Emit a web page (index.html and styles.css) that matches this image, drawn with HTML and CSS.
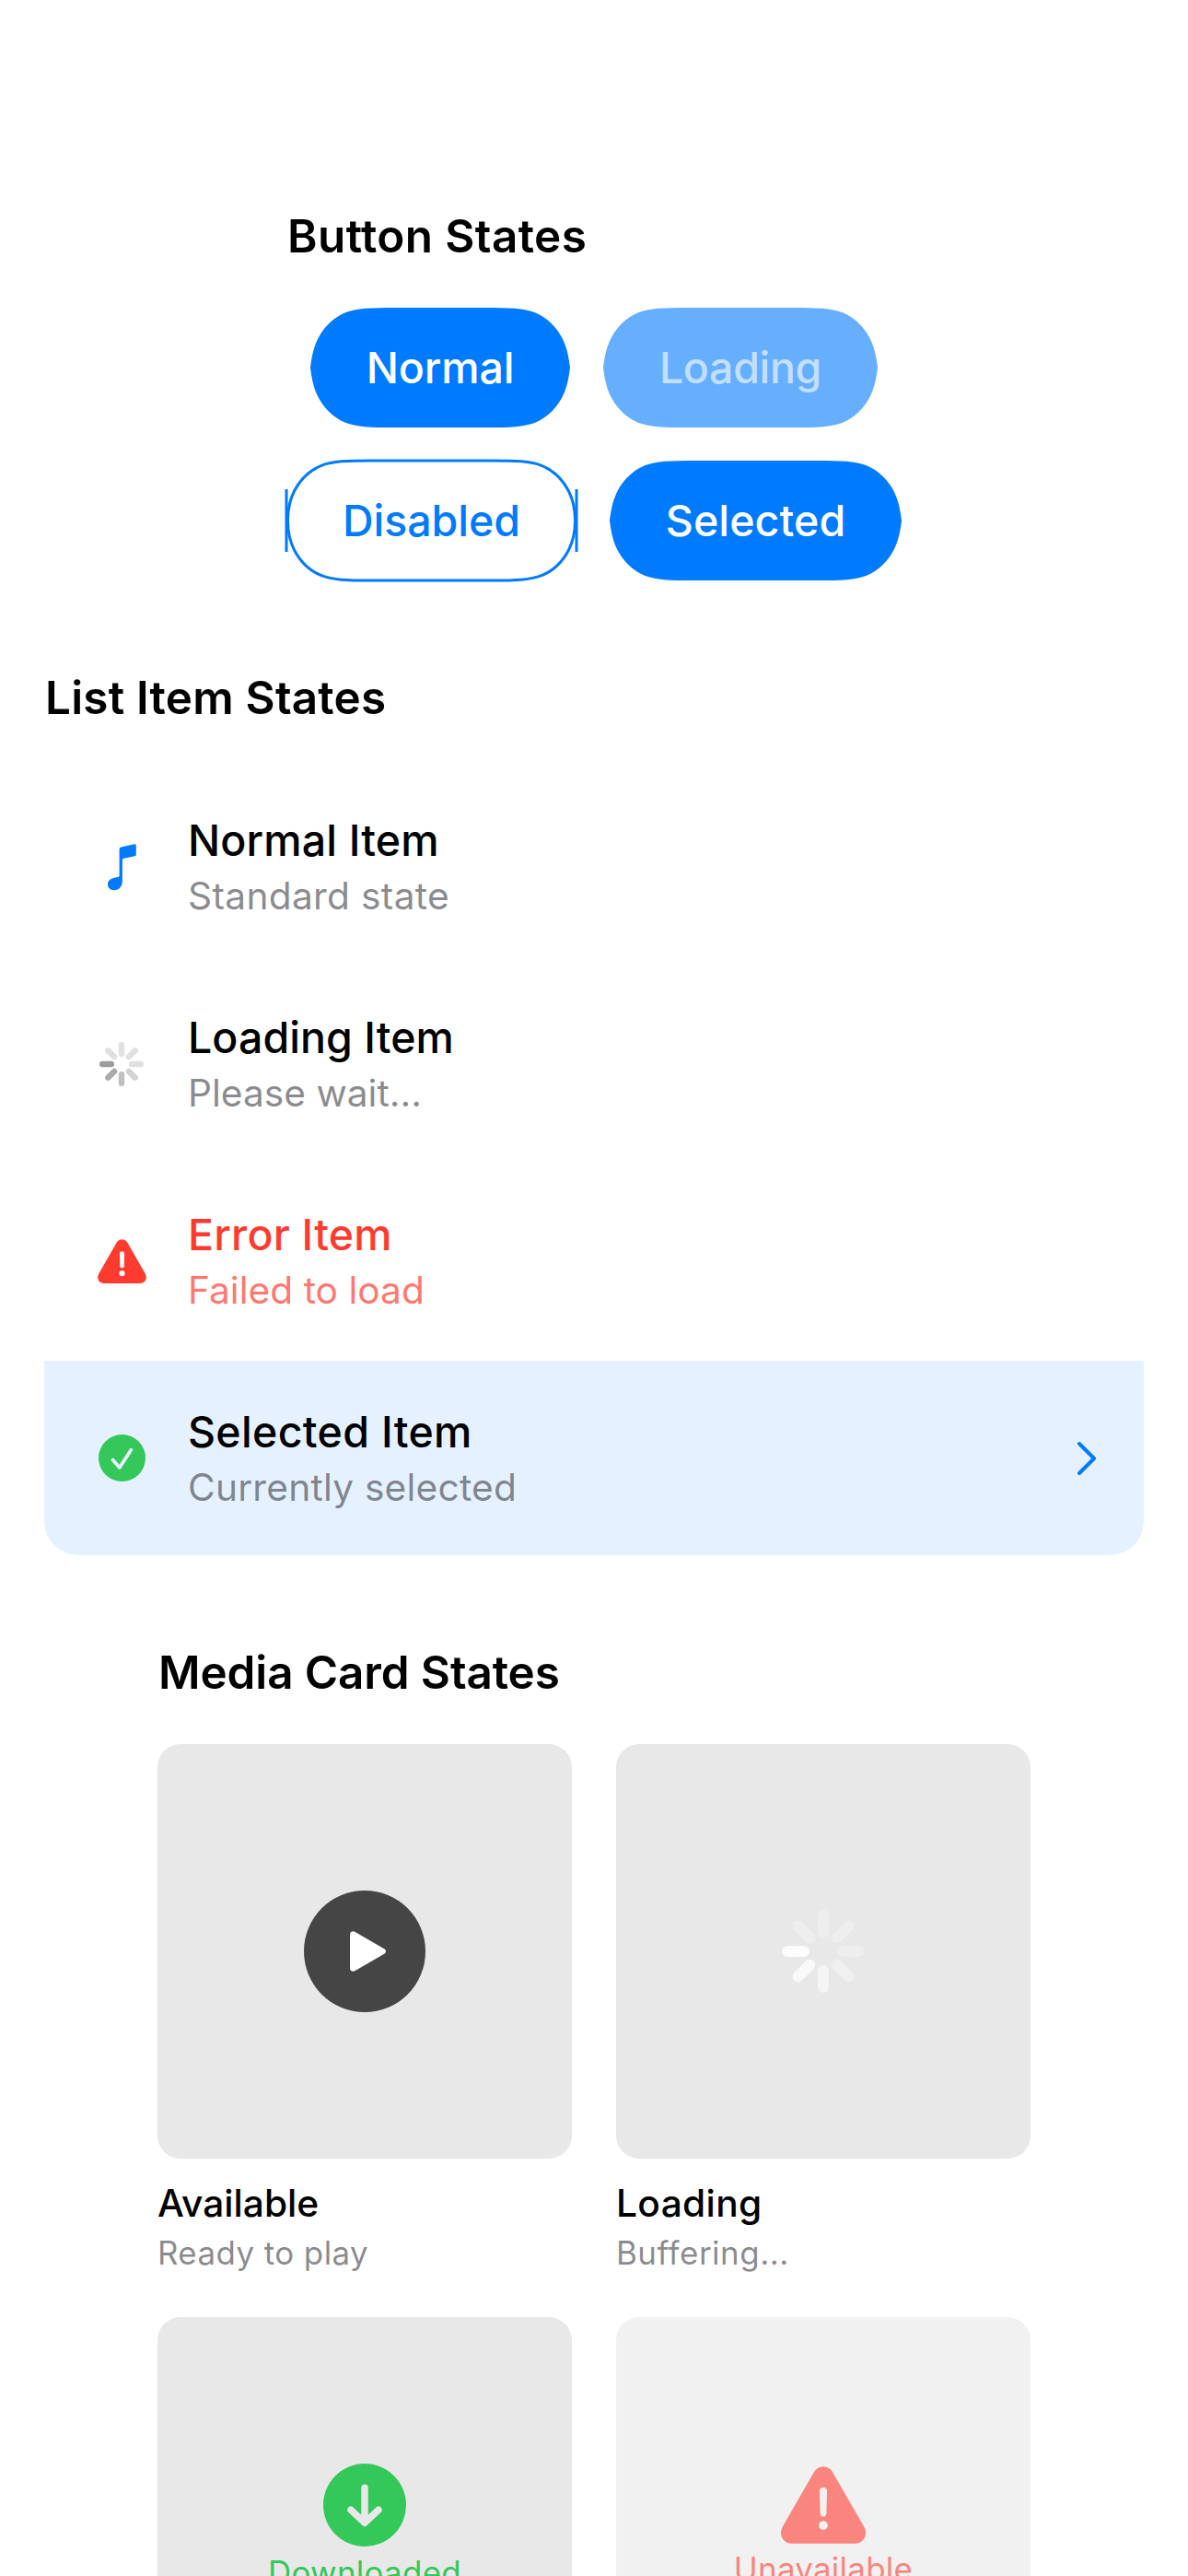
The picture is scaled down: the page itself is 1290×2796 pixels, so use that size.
FILE: index.html
```html
<!DOCTYPE html>
<html lang="en">
<head>
<meta charset="utf-8">
<title>Component States</title>
<link rel="stylesheet" href="styles.css">
</head>
<body>
<svg width="0" height="0" class="defs" aria-hidden="true">
  <defs>
    <g id="spinner" stroke="currentColor" stroke-width="12" stroke-linecap="round">
      <path d="M21 0H39" opacity=".27"/>
      <path d="M21 0H39" opacity=".38" transform="rotate(45)"/>
      <path d="M21 0H39" opacity=".55" transform="rotate(90)"/>
      <path d="M21 0H39" opacity=".74" transform="rotate(135)"/>
      <path d="M21 0H39" opacity=".87" transform="rotate(180)"/>
      <path d="M21 0H39" opacity=".27" transform="rotate(225)"/>
      <path d="M21 0H39" opacity=".27" transform="rotate(270)"/>
      <path d="M21 0H39" opacity=".27" transform="rotate(315)"/>
    </g>
  </defs>
</svg>
<main class="page">
  <section class="section buttons">
    <h2 class="heading heading-buttons">Button States</h2>
    <div class="button-rows">
      <div class="button-row">
        <button class="btn btn-normal">
          <svg class="btn-shape" viewBox="0 0 282 130"><path d="M0 65C2 49 4.5 41 8.5 33C14.5 21.5 25 10.500 38 5.300C50 .5 66 0 92 0H190C216 0 232 .5 244 5.300C257 10.500 267.500 21.500 273.500 33C277.500 41 280 49 282 65C280 81 277.500 89 273.500 97C267.500 108.500 257 119.500 244 124.700C232 129.500 216 130 190 130H92C66 130 50 129.500 38 124.700C25 119.500 14.500 108.500 8.500 97C4.500 89 2 81 0 65Z"/></svg>
          <span class="btn-label">Normal</span>
        </button>
        <button class="btn btn-loading">
          <svg class="btn-shape" viewBox="0 0 298 130"><path d="M0 65C2 49 4.5 41 8.5 33C14.5 21.5 25 10.500 38 5.300C50 .5 66 0 92 0H206C232 0 248 .5 260 5.300C273 10.500 283.500 21.500 289.500 33C293.500 41 296 49 298 65C296 81 293.500 89 289.500 97C283.500 108.500 273 119.500 260 124.700C248 129.500 232 130 206 130H92C66 130 50 129.500 38 124.700C25 119.500 14.500 108.500 8.500 97C4.500 89 2 81 0 65Z"/></svg>
          <span class="btn-label">Loading</span>
        </button>
      </div>
      <div class="button-row">
        <button class="btn btn-disabled">
          <svg class="btn-shape" viewBox="0 0 315 130"><path d="M1.500 65C1.500 51 4.5 41 8.5 33C14.5 21.5 25 10.500 38 5.300C50 .5 66 0 92 0H223C249 0 265 .5 277 5.300C290 10.500 300.500 21.500 306.500 33C310.500 41 313.500 51 313.500 65C313.500 79 310.500 89 306.500 97C300.500 108.500 290 119.500 277 124.700C265 129.500 249 130 223 130H92C66 130 50 129.500 38 124.700C25 119.500 14.500 108.500 8.500 97C4.500 89 1.500 79 1.500 65Z"/><path d="M0 31V99M315 31V99"/></svg>
          <span class="btn-label">Disabled</span>
        </button>
        <button class="btn btn-selected">
          <svg class="btn-shape" viewBox="0 0 317 130"><path d="M0 65C2 49 4.5 41 8.5 33C14.5 21.5 25 10.500 38 5.300C50 .5 66 0 92 0H225C251 0 267 .5 279 5.300C292 10.500 302.500 21.500 308.500 33C312.500 41 315 49 317 65C315 81 312.500 89 308.500 97C302.500 108.500 292 119.500 279 124.700C267 129.500 251 130 225 130H92C66 130 50 129.500 38 124.700C25 119.500 14.500 108.500 8.500 97C4.500 89 2 81 0 65Z"/></svg>
          <span class="btn-label">Selected</span>
        </button>
      </div>
    </div>
  </section>

  <section class="section list-section">
    <h2 class="heading heading-list">List Item States</h2>
    <ul class="list">
      <li class="item">
        <span class="item-icon blue">
          <svg width="72" height="72" viewBox="0 0 72 72" fill="currentColor"><path d="M36 14.300L49.900 11.300C51.100 11 51.800 11.700 51.800 12.900V22.200C51.800 23.400 51.300 24 50.200 24.300L38.600 26.700C37.400 27 36.900 27.500 36.900 28.700V51C36.900 57.500 33.100 61.200 27.900 61.200C23.800 61.200 21 58.600 21 55C21 51.300 23.400 48.900 27.400 48L31.600 47.100C33 46.800 33.600 46.200 33.600 44.900V17.200C33.600 15.500 34.300 14.700 36 14.300Z"/></svg>
        </span>
        <div class="item-text">
          <div class="item-title ls-normal">Normal Item</div>
          <div class="item-sub ls-standard">Standard state</div>
        </div>
      </li>
      <li class="item">
        <span class="item-icon spinner-gray"><svg width="48" height="48" viewBox="-45 -45 90 90"><use href="#spinner"/></svg></span>
        <div class="item-text">
          <div class="item-title ls-loading">Loading Item</div>
          <div class="item-sub">Please wait...</div>
        </div>
      </li>
      <li class="item item-error">
        <span class="item-icon red">
          <svg class="icon-alert" width="53" height="48" viewBox="0 0 92 84"><path fill="currentColor" d="M36.200 5.800C40.600-1.600 51.400-1.600 55.800 5.800L90.200 65.500C95 73.800 90 83.800 80.500 83.800H11.500C2 83.800-3 73.800 1.800 65.500Z"/><path class="cut" d="M41.500 27.400C41.400 21.800 50.600 21.800 50.500 27.400L49.900 51.200C49.800 56 42.200 56 42.100 51.200Z"/><circle class="cut" cx="46" cy="65" r="5.300"/></svg>
        </span>
        <div class="item-text">
          <div class="item-title ls-error">Error Item</div>
          <div class="item-sub">Failed to load</div>
        </div>
      </li>
      <li class="item item-selected">
        <span class="item-icon green">
          <svg width="51" height="51" viewBox="0 0 51 51"><circle cx="25.500" cy="25.500" r="25.500" fill="currentColor"/><path class="tick" d="M15.500 27.500L22.800 36L35.300 16.700"/></svg>
        </span>
        <div class="item-text">
          <div class="item-title ls-selected">Selected Item</div>
          <div class="item-sub ls-current">Currently selected</div>
        </div>
        <svg class="chevron" width="24" height="40" viewBox="0 0 24 40"><path d="M2 4L18 20L2 36"/></svg>
      </li>
    </ul>
  </section>

  <section class="section media">
    <h2 class="heading heading-media">Media Card States</h2>
    <div class="cards">
      <article class="card">
        <div class="art art-center">
          <span class="play"><svg width="132" height="132" viewBox="0 0 132 132"><path d="M50 48C50 44.500 52.800 43.200 55.700 44.900L87.200 63.200C89.600 64.600 89.600 67.400 87.200 68.800L55.700 87.100C52.800 88.800 50 87.500 50 84Z" fill="#fff"/></svg></span>
        </div>
        <div class="card-title">Available</div>
        <div class="card-sub ls-ready">Ready to play</div>
      </article>
      <article class="card">
        <div class="art art-center spinner-white"><svg width="90" height="90" viewBox="-45 -45 90 90"><use href="#spinner"/></svg></div>
        <div class="card-title ls-card-loading">Loading</div>
        <div class="card-sub ls-buffering">Buffering...</div>
      </article>
      <article class="card">
        <div class="art art-status green">
          <svg width="90" height="90" viewBox="0 0 90 90"><circle cx="45" cy="45" r="45" fill="currentColor"/><path class="arrow" d="M45 26.200V63.500M30 50.300L45 64.200L60 50.300"/></svg>
          <span class="status">Downloaded</span>
        </div>
      </article>
      <article class="card card-off">
        <div class="art art-status art-status-off">
          <svg class="icon-alert" width="92" height="84" viewBox="0 0 92 84"><path fill="currentColor" d="M36.200 5.800C40.600-1.600 51.400-1.600 55.800 5.800L90.200 65.500C95 73.800 90 83.800 80.500 83.800H11.500C2 83.800-3 73.800 1.800 65.500Z"/><path class="cut" d="M42 26.600C41.900 21.600 50.100 21.600 50 26.600L49.400 51.200C49.300 55.700 42.700 55.700 42.600 51.200Z"/><circle class="cut" cx="46" cy="64.100" r="4.900"/></svg>
          <span class="status">Unavailable</span>
        </div>
      </article>
    </div>
  </section>
</main>
</body>
</html>
```
FILE: styles.css
```css
* { box-sizing: border-box; }

html, body { margin: 0; height: 2796px; overflow: hidden; background: #fff; }

body { font-family: Inter, "Liberation Sans", sans-serif; color: #000; }

.defs { position: absolute; }
svg { display: block; flex: none; }

.page {
  display: flex;
  flex-direction: column;
  align-items: center;
  gap: 97px;
  height: 2796px;
  overflow: hidden;
  padding-top: 226px;
}

.section { display: flex; flex-direction: column; gap: 48px; }

.heading { margin: 0; padding-left: 1px; font-size: 49.4px; line-height: 60px; font-weight: 600; white-space: nowrap; }
.heading-buttons { letter-spacing: .42px; }
.heading-list { letter-spacing: .22px; }
.heading-media { letter-spacing: -.09px; }

.blue { color: #007aff; }
.red { color: #ff3b30; }
.green { color: #34c759; }

/* Buttons */
.buttons { width: 668px; }
.button-rows { display: flex; flex-direction: column; gap: 36px; }
.button-row { display: flex; justify-content: center; gap: 36px; }

.btn {
  display: grid;
  height: 130px;
  padding: 0;
  border: 0;
  background: none;
  color: #fff;
  font: 500 46.5px/130px Inter, "Liberation Sans", sans-serif;
}
.btn-shape, .btn-label { grid-area: 1 / 1; }
.btn-shape { width: 100%; height: 130px; fill: #007aff; overflow: visible; }
.btn-label { z-index: 1; text-align: center; }

.btn-normal { width: 282px; letter-spacing: -.11px; }
.btn-loading { width: 298px; color: #c2dfff; letter-spacing: -.33px; }
.btn-loading .btn-shape { fill: #66afff; }
.btn-disabled { width: 315px; color: #007aff; }
.btn-disabled .btn-shape { fill: none; stroke: #007aff; stroke-width: 3; }
.btn-selected { width: 317px; letter-spacing: .11px; }

/* List */
.list-section { width: 1194px; }
.list { display: flex; flex-direction: column; gap: 3px; margin: 0; padding: 0; list-style: none; }

.item { display: flex; align-items: center; gap: 36px; height: 211px; padding: 0 48px; }
.item-icon { display: flex; align-items: center; justify-content: center; width: 72px; height: 72px; }
.item-text { display: flex; flex-direction: column; flex: 1; gap: 7px; padding-bottom: 1px; white-space: nowrap; }
.item-title { font-size: 46.5px; line-height: 58px; font-weight: 500; }
.item-sub { font-size: 40.7px; line-height: 50px; color: rgba(60, 60, 67, .6); }

.item-error .item-title { color: #ff3b30; }
.item-error .item-sub { color: rgba(255, 59, 48, .7); }
.item-selected { background: #e5f1ff; border-radius: 0 0 37px 37px; }

.ls-normal { letter-spacing: .16px; }
.ls-loading { letter-spacing: .06px; }
.ls-error { letter-spacing: .24px; }
.ls-selected { letter-spacing: .33px; }
.ls-standard { letter-spacing: .31px; }
.ls-current { letter-spacing: .21px; }

.cut { fill: #fff; }
.tick { fill: none; stroke: #e5f1ff; stroke-width: 3.8; stroke-linecap: round; stroke-linejoin: round; }
.chevron { fill: none; stroke: #007aff; stroke-width: 4; stroke-linecap: round; stroke-linejoin: round; }
.spinner-gray { color: #8e8e93; }
.spinner-white { color: #fff; }

/* Media cards */
.media { width: 948px; }
.cards { display: grid; grid-template-columns: 450px 450px; gap: 49px 48px; }
.card { display: flex; flex-direction: column; }
.card-off { opacity: .6; }

.art { display: flex; height: 450px; border-radius: 25px; background: #e8e8e8; }
.art-center { align-items: center; justify-content: center; }
.art-status { flex-direction: column; align-items: center; gap: 7px; padding-top: 159px; }
.art-status-off { gap: 6px; padding-top: 162px; color: #f7342a; }

.play { border-radius: 50%; background: #454545; }
.arrow { fill: none; stroke: #e8e8e8; stroke-width: 7.5; stroke-linecap: round; stroke-linejoin: round; }
.art-status .cut { fill: #e8e8e8; }
.status { font-size: 34.9px; line-height: 42px; letter-spacing: .28px; }

.card-title { margin-top: 24px; font-size: 40.7px; line-height: 50px; font-weight: 500; }
.card-sub { margin-top: 7px; font-size: 34.9px; line-height: 42px; color: rgba(60, 60, 67, .6); }
.ls-card-loading { letter-spacing: .34px; }
.ls-ready { letter-spacing: .43px; }
.ls-buffering { letter-spacing: .53px; }
```
